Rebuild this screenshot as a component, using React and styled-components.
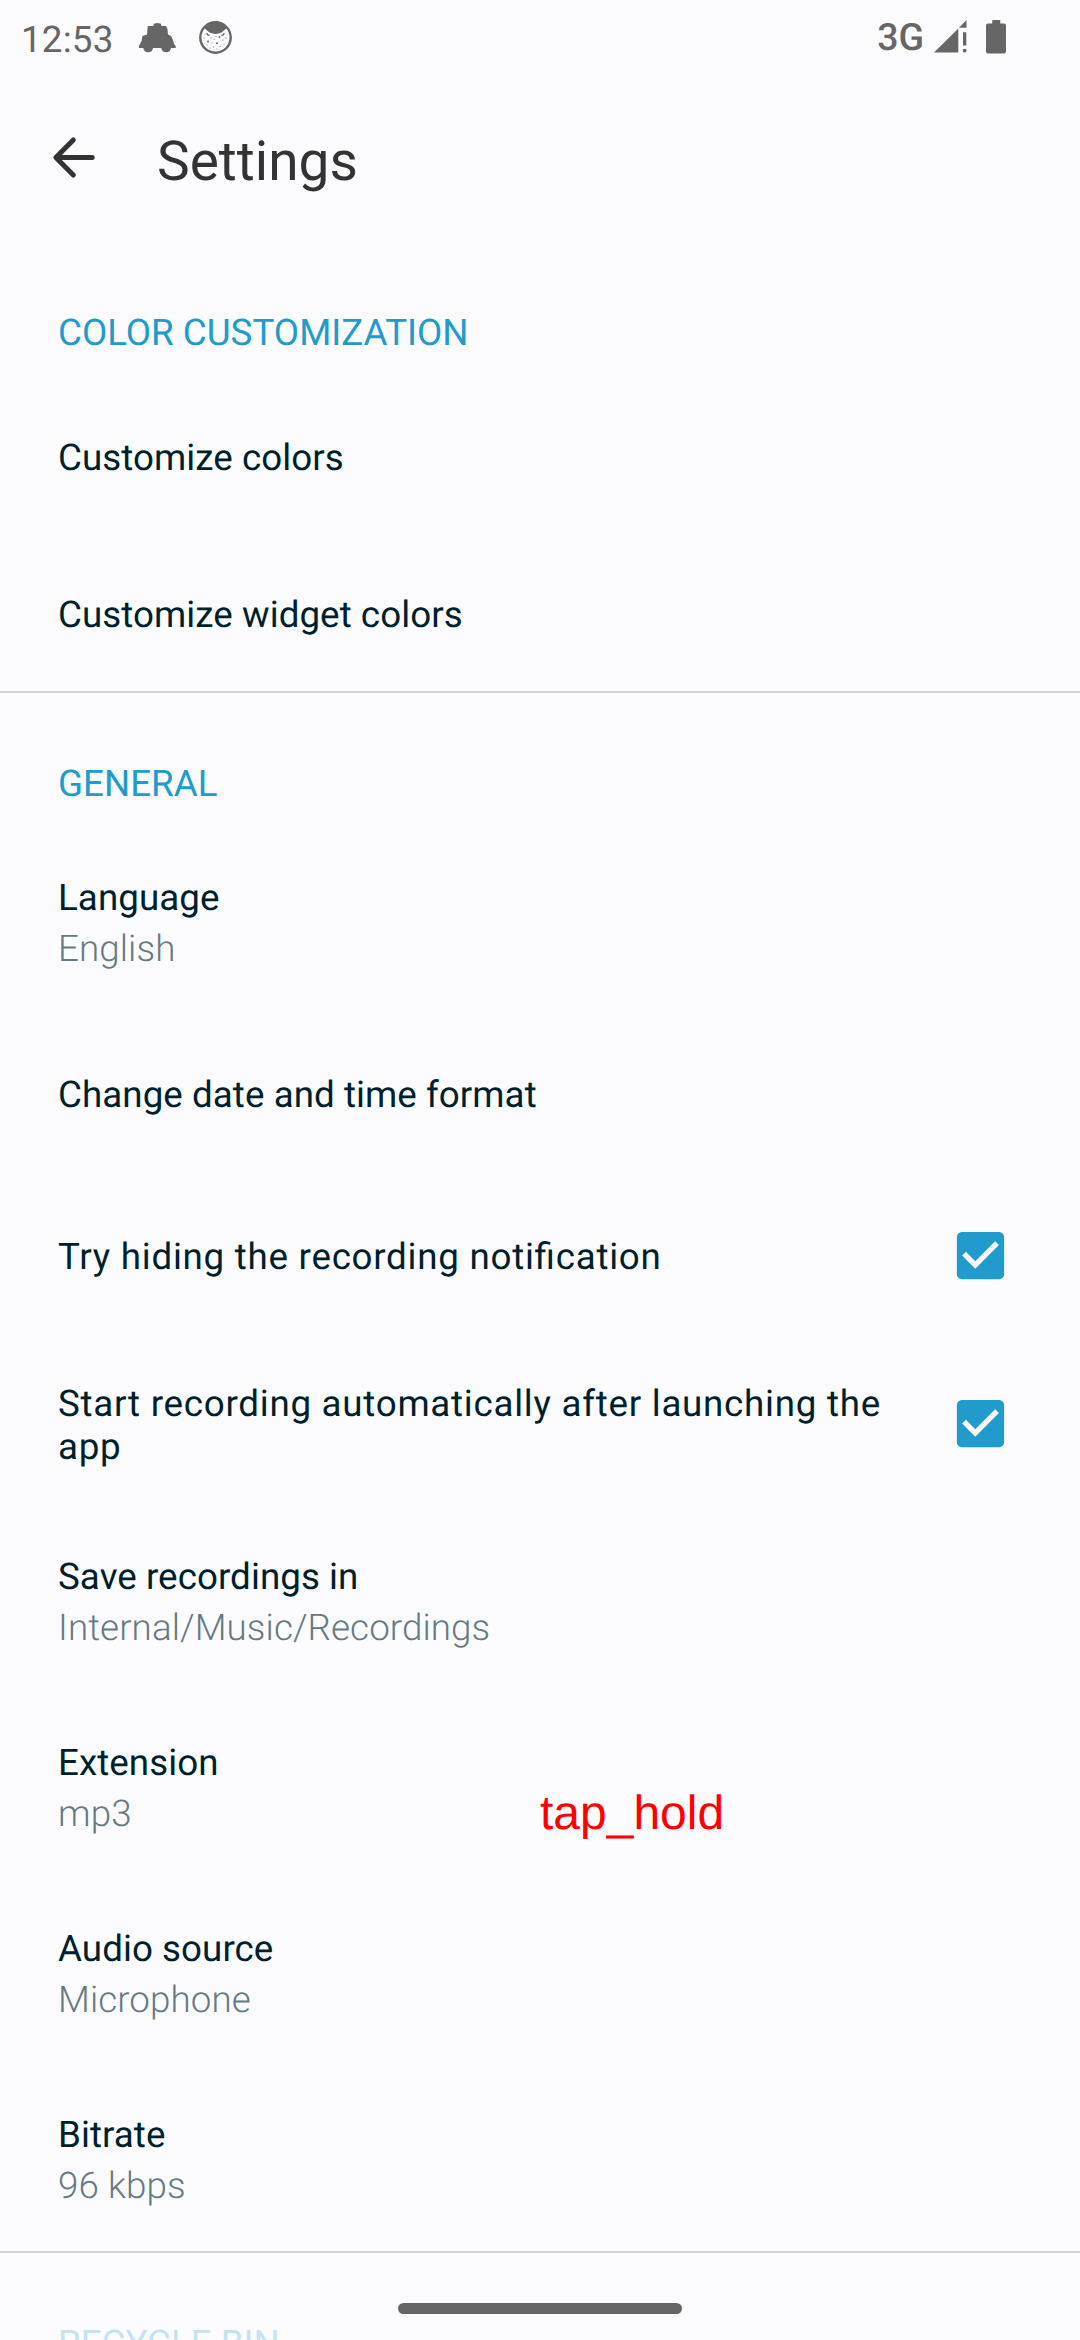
import React from "react";
import styled, { createGlobalStyle } from "styled-components";

const GlobalStyle = createGlobalStyle`
  * { box-sizing: border-box; }
  body {
    margin: 0;
    background: #fcfcff;
    font-family: Roboto, sans-serif;
    text-rendering: geometricPrecision;
  }
`;

const Screen = styled.div`
  position: relative;
  display: flex;
  flex-direction: column;
  width: 1080px;
  height: 2340px;
  overflow: hidden;
  background: #fcfcff;
`;

const StatusBar = styled.header`
  display: flex;
  flex: none;
  align-items: center;
  justify-content: space-between;
  height: 76px;
  padding: 0 74px 0 21px;
  color: #666;
`;

const StatusGroup = styled.div`
  display: flex;
  align-items: center;
`;

const Clock = styled.span`
  width: 118px;
  padding-top: 3px;
  font-size: 36.75px;
  line-height: 43px;
  letter-spacing: 0.2px;
`;

const Network = styled.span`
  font-size: 37.5px;
  font-weight: 490;
  line-height: 43px;
  margin-right: 10px;
`;

const Glyph = styled.svg`
  display: block;
  flex: none;
  width: ${(p) => p.$w}px;
  height: ${(p) => p.$h}px;
  margin-left: ${(p) => p.$gap || 0}px;
  margin-bottom: ${(p) => p.$lift || 0}px;
`;

const Toolbar = styled.div`
  display: flex;
  flex: none;
  align-items: center;
  height: 166px;
  padding: 0 0 0 52px;
`;

const BackButton = styled.button`
  display: flex;
  width: 105px;
  height: 48px;
  padding: 0;
  border: 0;
  background: none;
`;

const Title = styled.h1`
  margin: 6px 0 0;
  color: #333;
  font-size: 55px;
  font-weight: 400;
  line-height: 64px;
`;

const Section = styled.section`
  flex: none;
  padding-top: 69px;
  border-bottom: 2px solid #d2d2d4;
`;

const SectionTitle = styled.h2`
  margin: 0 0 23px;
  padding-left: 58px;
  color: #219bcc;
  font-size: 36.75px;
  font-weight: 400;
  line-height: 43px;
  opacity: ${(p) => (p.$faded ? 0.25 : 1)};
`;

const Row = styled.div`
  height: ${(p) => (p.$tall ? 186 : 157)}px;
  padding: ${(p) => (p.$tall ? 48 : 59)}px 58px 0;
`;

const CheckRow = styled.label`
  display: flex;
  align-items: center;
  justify-content: space-between;
  height: 168px;
  padding: 0 68px 0 58px;
`;

const Label = styled.div`
  color: #001f2c;
  font-size: 36.75px;
  line-height: 43px;
  letter-spacing: 0.05px;
  font-feature-settings: "liga" 1;
`;

const CheckLabel = styled(Label)`
  width: 840px;
  padding-top: 3px;
  letter-spacing: 0.73px;
`;

const Value = styled.div`
  margin-top: 8px;
  color: #667a84;
  font-size: 36.75px;
  font-weight: 300;
  line-height: 43px;
  letter-spacing: 0.08px;
`;

const Annotation = styled.div`
  position: absolute;
  left: 540px;
  top: 1786px;
  color: #f00;
  font-family: "Liberation Sans", Arial, sans-serif;
  font-size: 48px;
  line-height: 55px;
`;

const HomeHandle = styled.div`
  position: absolute;
  left: 398px;
  bottom: 26px;
  width: 284px;
  height: 11px;
  border-radius: 6px;
  background: #666;
`;

function Checkbox() {
  return (
    <Glyph $w={63} $h={63} viewBox="0 0 24 24">
      <path
        fill="#219bcc"
        d="M19 3H5c-1.11 0-2 .9-2 2v14c0 1.1.89 2 2 2h14c1.11 0 2-.9 2-2V5c0-1.1-.89-2-2-2zm-9 14-5-5 1.41-1.41L10 14.17l7.59-7.59L19 8l-9 9z"
      />
    </Glyph>
  );
}

const speckles = [
  [6, 13, 0.5], [5, 17, 0.5], [9, 20.5, 1], [12, 17, 0.6], [8, 24, 0.5],
  [13, 22, 0.5], [15, 18.5, 0.5], [18, 22.3, 1], [20.5, 16, 0.9], [17, 15.5, 0.5],
  [24, 19, 0.5], [27, 17, 0.6], [25, 23, 0.5], [21, 25.5, 0.5], [14.5, 26, 0.6],
  [18, 28, 0.5], [11, 27, 0.5],
];

function CatBadge() {
  return (
    <Glyph $w={33} $h={33} $gap={22.5} $lift={1} viewBox="0 0 33 33" fill="#666">
      <circle cx="16.500" cy="16.500" r="15.200" fill="none" stroke="#666" strokeWidth="2.400" />
      <path d="M4.500 6.500 10.500 11.600Q16.500 14.500 22.500 11.600L28.500 6.500Q24 1 16.500 1T4.500 6.500z" />
      <path d="M8 12q0 2.500 2.500 2.200M25 12q0 2.500-2.500 2.200" fill="none" stroke="#666" strokeWidth="1.400" />
      {speckles.map(([x, y, r]) => (
        <circle key={`${x}-${y}`} cx={x} cy={y} r={r} />
      ))}
    </Glyph>
  );
}

function Setting({ label, value }) {
  return (
    <Row $tall={Boolean(value)}>
      <Label>{label}</Label>
      {value && <Value>{value}</Value>}
    </Row>
  );
}

function CheckSetting({ label }) {
  return (
    <CheckRow>
      <CheckLabel>{label}</CheckLabel>
      <Checkbox />
    </CheckRow>
  );
}

export default function App() {
  return (
    <Screen>
      <GlobalStyle />
      <StatusBar>
        <StatusGroup>
          <Clock>12:53</Clock>
          <Glyph $w={37} $h={30} viewBox="0 0 37 30" fill="#666">
            <path d="M14.700 1.500Q15 0 18.500 0T22 1.500L22.500 3H27L28.500 6 29 11.500 32 13 34 17 35 21 36.700 23V25H32A4.900 4.900 0 0 1 22.300 25H14A4.900 4.900 0 0 1 4.300 25H0V23L2.500 18 3.500 13 8 11.500 8.800 3H14z" />
          </Glyph>
          <CatBadge />
        </StatusGroup>
        <StatusGroup>
          <Network>3G</Network>
          <Glyph $w={33} $h={33} $lift={3} viewBox="0 0 33 33" fill="#666">
            <path d="M0 32.500 24.300 8.400v24.100zM25 7.700 32.500 0v7.700zM29 12.300h3.300v13.300H29zM29 29h3.300v3.300H29z" />
          </Glyph>
          <Glyph $w={20} $h={34} $gap={19} $lift={2} viewBox="0 0 20 34" fill="#666">
            <path d="M6.300 0h8v3.500H18a2 2 0 0 1 2 2v26a2 2 0 0 1-2 2H2a2 2 0 0 1-2-2v-26a2 2 0 0 1 2-2h4.300z" />
          </Glyph>
        </StatusGroup>
      </StatusBar>

      <Toolbar>
        <BackButton aria-label="Back">
          <Glyph $w={48} $h={48} viewBox="0 0 48 48" fill="none" stroke="#333" strokeWidth="5" strokeLinecap="round" strokeLinejoin="round">
            <path d="M21.300 4.900 3.900 22.400 21.300 40M4.500 22.400h35.700" />
          </Glyph>
        </BackButton>
        <Title>Settings</Title>
      </Toolbar>

      <Section>
        <SectionTitle>COLOR CUSTOMIZATION</SectionTitle>
        <Setting label="Customize colors" />
        <Setting label="Customize widget colors" />
      </Section>

      <Section>
        <SectionTitle>GENERAL</SectionTitle>
        <Setting label="Language" value="English" />
        <Setting label="Change date and time format" />
        <CheckSetting label="Try hiding the recording notification" />
        <CheckSetting label="Start recording automatically after launching the app" />
        <Setting label="Save recordings in" value="Internal/Music/Recordings" />
        <Setting label="Extension" value="mp3" />
        <Setting label="Audio source" value="Microphone" />
        <Setting label="Bitrate" value="96 kbps" />
      </Section>

      <Section>
        <SectionTitle $faded>RECYCLE BIN</SectionTitle>
      </Section>

      <Annotation>tap_hold</Annotation>
      <HomeHandle />
    </Screen>
  );
}
